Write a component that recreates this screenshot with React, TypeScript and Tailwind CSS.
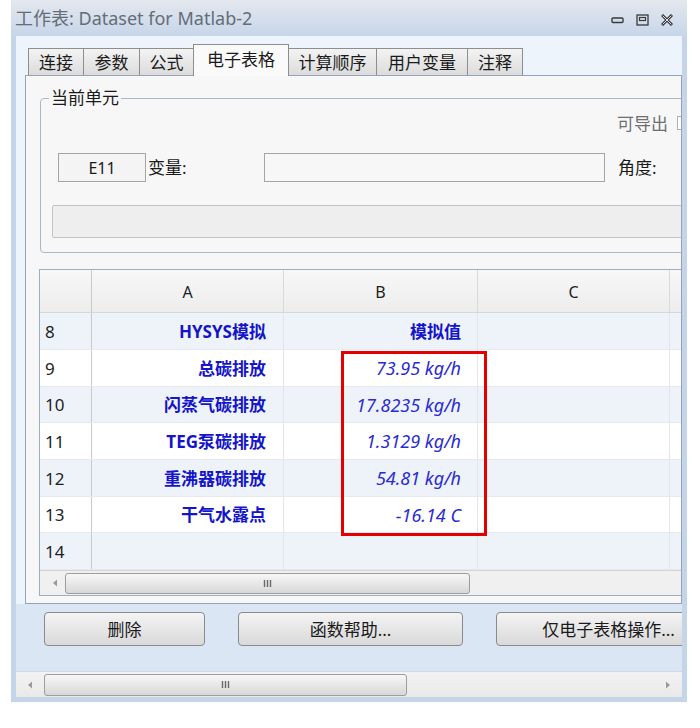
import React from "react";

type Row = { n: string; a: string; b: string; bold: boolean; h: string; stripe: boolean };

const rows: Row[] = [
  { n: "8", a: "HYSYS模拟", b: "模拟值", bold: true, h: "h-[37px]", stripe: true },
  { n: "9", a: "总碳排放", b: "73.95 kg/h", bold: false, h: "h-[37px]", stripe: false },
  { n: "10", a: "闪蒸气碳排放", b: "17.8235 kg/h", bold: false, h: "h-[36px]", stripe: true },
  { n: "11", a: "TEG泵碳排放", b: "1.3129 kg/h", bold: false, h: "h-[37px]", stripe: false },
  { n: "12", a: "重沸器碳排放", b: "54.81 kg/h", bold: false, h: "h-[37px]", stripe: true },
  { n: "13", a: "干气水露点", b: "-16.14 C", bold: false, h: "h-[36px]", stripe: false },
  { n: "14", a: "", b: "", bold: false, h: "h-[37px]", stripe: true },
];

const tabs: { label: string; w: string; sel?: boolean }[] = [
  { label: "连接", w: "w-[56px]" },
  { label: "参数", w: "w-[57px]" },
  { label: "公式", w: "w-[55px]" },
  { label: "电子表格", w: "w-[96px]", sel: true },
  { label: "计算顺序", w: "w-[89px]" },
  { label: "用户变量", w: "w-[92px]" },
  { label: "注释", w: "w-[56px]" },
];

function LeftArrow() {
  return (
    <svg width="6" height="8" viewBox="0 0 6 8">
      <path d="M5 0.5 L1 4 L5 7.5 Z" fill="#9a9a9a" />
    </svg>
  );
}
function RightArrow() {
  return (
    <svg width="6" height="8" viewBox="0 0 6 8">
      <path d="M1 0.5 L5 4 L1 7.5 Z" fill="#9a9a9a" />
    </svg>
  );
}
function Grip() {
  return (
    <svg width="9" height="9" viewBox="0 0 9 9">
      <path d="M1.5 1 V8 M4.5 1 V8 M7.5 1 V8" stroke="#6a6a6a" strokeWidth="1.4" />
    </svg>
  );
}

export default function App() {
  return (
    <div className="w-[700px] h-[728px] bg-white font-['Noto_Sans','Noto_Sans_CJK_SC',sans-serif] text-[#1e1e1e] overflow-hidden">
      <div className="ml-[11px] w-[676px] h-[702px] flex flex-col">
        {/* title bar */}
        <div className="h-[36px] shrink-0 flex items-center bg-gradient-to-b from-[#e4e8ee] to-[#c7d6ea] pl-[4px] pr-[14px]">
          <div className="text-[18px] leading-none text-[#646d78] whitespace-nowrap">工作表: Dataset for Matlab-2</div>
          <div className="ml-auto flex items-center gap-[12px] pt-[4px]">
            <svg width="13" height="8" viewBox="0 0 13 8">
              <rect x="1" y="2" width="11" height="4.5" rx="1" fill="none" stroke="#3a3a3a" strokeWidth="1.4" />
            </svg>
            <svg width="13" height="12" viewBox="0 0 13 12">
              <rect x="1" y="1" width="11" height="10" fill="none" stroke="#3a3a3a" strokeWidth="1.3" />
              <rect x="3.5" y="3.5" width="6" height="3" fill="none" stroke="#3a3a3a" strokeWidth="1.2" />
            </svg>
            <svg width="12" height="12" viewBox="0 0 12 12">
              <path d="M2 2 L10 10 M10 2 L2 10" stroke="#3a3a3a" strokeWidth="3" strokeLinecap="square" />
              <path d="M2 2 L10 10 M10 2 L2 10" stroke="#dfe6ef" strokeWidth="1" strokeLinecap="square" />
            </svg>
          </div>
        </div>

        {/* frame */}
        <div className="flex-1 flex flex-col border-x-[5px] border-b-[5px] border-[#c4d5ea] bg-[#eef4fb] overflow-hidden">
          {/* tab strip */}
          <div className="h-[39px] shrink-0 flex items-end pl-[12px]">
            {tabs.map((t, i) =>
              t.sel ? (
                <div
                  key={t.label}
                  className={`${t.w} h-[32px] -mb-px relative z-10 ${i > 0 ? "-ml-px" : ""} border-x border-t border-[#8e8e8e] bg-[#fafafa] flex items-center justify-center text-[17px] leading-none text-[#1a1a1a] pb-[2px]`}
                >
                  {t.label}
                </div>
              ) : (
                <div
                  key={t.label}
                  className={`${t.w} h-[27px] ${i > 0 ? "-ml-px" : ""} border-x border-t border-[#8e8e8e] bg-gradient-to-b from-[#f3f3f3] to-[#dcdcdc] flex items-center justify-center text-[17px] leading-none text-[#1a1a1a]`}
                >
                  {t.label}
                </div>
              )
            )}
          </div>

          {/* panel */}
          <div className="ml-[9px] h-[529px] shrink-0 border border-[#93a3b8] bg-[#f7f7f7] overflow-hidden">
            <fieldset className="ml-[14px] mt-[11px] w-[700px] border border-[#aab7c7] rounded-[4px] pb-[14px]">
              <legend className="ml-[8px] px-[2px] text-[17px] leading-[22px] text-[#1a1a1a]">当前单元</legend>
              <div className="mt-[3px] h-[22px] flex items-center pl-[576px]">
                <span className="text-[17px] leading-none text-[#6f6f6f] whitespace-nowrap">可导出</span>
                <span className="ml-[9px] w-[13px] h-[14px] border border-[#b0b0b0] bg-white shrink-0" />
              </div>
              <div className="mt-[19px] h-[29px] flex items-center">
                <div className="ml-[17px] w-[88px] h-[29px] shrink-0 border border-[#a5a5a5] bg-[#f4f4f4] flex items-center justify-center text-[16px] leading-none text-[#1a1a1a]">
                  E11
                </div>
                <div className="w-[118px] shrink-0 pl-[2px] text-[17px] leading-none text-[#1a1a1a]">变量:</div>
                <div className="w-[341px] h-[29px] shrink-0 border border-[#a5a5a5] bg-[#f7f7f7]" />
                <div className="ml-[13px] text-[17px] leading-none text-[#1a1a1a] whitespace-nowrap">角度:</div>
              </div>
              <div className="mt-[23px] ml-[11px] h-[33px] w-[680px] border border-[#c4c4c4] bg-[#eeeeee] rounded-[2px]" />
            </fieldset>

            {/* spreadsheet */}
            <div className="relative ml-[13px] mt-[16px] w-[700px] border border-[#9cadc4] bg-white">
              <div className="h-[43px] flex bg-gradient-to-b from-[#f7f7f7] to-[#ededed] border-b border-[#d6d6d6]">
                <div className="w-[52px] shrink-0 border-r border-[#c9c9c9]" />
                <div className="w-[192px] shrink-0 border-r border-[#d9d9d9] flex items-center justify-center text-[16px] leading-none pt-[2px]">A</div>
                <div className="w-[194px] shrink-0 border-r border-[#d9d9d9] flex items-center justify-center text-[16px] leading-none pt-[2px]">B</div>
                <div className="w-[192px] shrink-0 border-r border-[#d9d9d9] flex items-center justify-center text-[16px] leading-none pt-[2px]">C</div>
                <div className="flex-1" />
              </div>
              {rows.map((r) => (
                <div key={r.n} className={`${r.h} flex ${r.stripe ? "bg-[#eef3fa]" : "bg-white"} border-b border-[#e6eaf0]`}>
                  <div className="w-[52px] shrink-0 border-r border-[#c9c9c9] flex items-center pl-[5px] text-[17px] leading-none text-[#1e1e1e]">{r.n}</div>
                  <div className="w-[192px] shrink-0 border-r border-[#e2e5ea] flex items-center justify-end pr-[17px] text-[17px] leading-none text-[#1414c8] font-bold whitespace-nowrap">
                    {r.a}
                  </div>
                  <div
                    className={`w-[194px] shrink-0 border-r border-[#e2e5ea] flex items-center justify-end pr-[16px] leading-none whitespace-nowrap ${r.bold ? "font-bold text-[#1414c8] text-[17px]" : "italic text-[#2a2ad2] text-[18px]"}`}
                  >
                    {r.b}
                  </div>
                  <div className="w-[192px] shrink-0 border-r border-[#e2e5ea]" />
                  <div className="flex-1" />
                </div>
              ))}
              {/* sheet scrollbar */}
              <div className="h-[25px] flex items-center bg-[#f0f0f0] border-t border-[#d4d4d4]">
                <div className="w-[25px] shrink-0 flex items-center justify-center pl-[4px]">
                  <LeftArrow />
                </div>
                <div className="w-[405px] h-[21px] shrink-0 rounded-[3px] border border-[#9d9d9d] bg-gradient-to-b from-[#f7f7f7] to-[#d8d8d8] flex items-center justify-center">
                  <Grip />
                </div>
              </div>
              {/* highlight box */}
              <div className="absolute left-[301px] top-[81px] w-[146px] h-[185px] border-[3px] border-[#e40000]" />
            </div>
          </div>

          {/* buttons */}
          <div className="h-[67px] shrink-0 flex items-start gap-[33px] pl-[28px] pt-[8px] bg-[#dbe6f4] overflow-hidden">
            <button className="w-[161px] h-[34px] shrink-0 rounded-[4px] border border-[#8a8a8a] bg-gradient-to-b from-[#f4f4f4] to-[#d9d9d9] text-[17px] leading-none text-[#1a1a1a]">
              删除
            </button>
            <button className="w-[225px] h-[34px] shrink-0 rounded-[4px] border border-[#8a8a8a] bg-gradient-to-b from-[#f4f4f4] to-[#d9d9d9] text-[17px] leading-none text-[#1a1a1a]">
              函数帮助...
            </button>
            <button className="w-[225px] h-[34px] shrink-0 rounded-[4px] border border-[#8a8a8a] bg-gradient-to-b from-[#f4f4f4] to-[#d9d9d9] text-[17px] leading-none text-[#1a1a1a] whitespace-nowrap">
              仅电子表格操作...
            </button>
          </div>

          {/* bottom scrollbar */}
          <div className="h-[26px] shrink-0 flex items-center bg-gradient-to-b from-[#f3f3f3] to-[#e9e9e9] border-t border-[#cfd8e4]">
            <div className="w-[28px] shrink-0 flex items-center justify-center">
              <LeftArrow />
            </div>
            <div className="w-[363px] h-[22px] shrink-0 rounded-[3px] border border-[#9d9d9d] bg-gradient-to-b from-[#f7f7f7] to-[#d8d8d8] flex items-center justify-center">
              <Grip />
            </div>
            <div className="ml-auto w-[28px] shrink-0 flex items-center justify-center">
              <RightArrow />
            </div>
          </div>
        </div>
      </div>
    </div>
  );
}
